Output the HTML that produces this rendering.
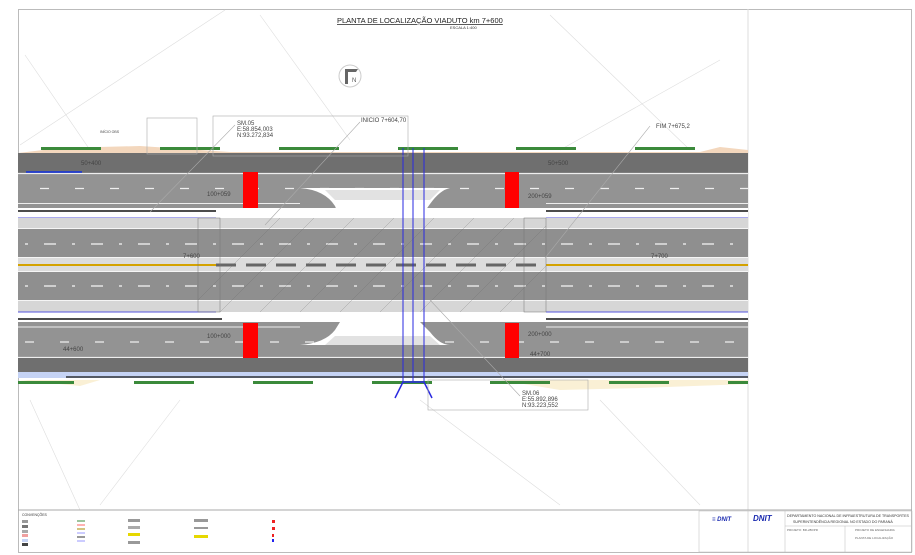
<!DOCTYPE html>
<html><head><meta charset="utf-8"><style>
html,body{margin:0;padding:0;background:#fff;}
svg{display:block;font-family:"Liberation Sans",sans-serif;}
</style></head><body>
<svg width="915" height="555" viewBox="0 0 915 555" xmlns="http://www.w3.org/2000/svg">
<rect width="915" height="555" fill="#fff"/>
<!-- frame -->
<rect x="18.5" y="9.5" width="893" height="543" fill="none" stroke="#bbb" stroke-width="1"/>
<line x1="748" y1="9" x2="748" y2="510" stroke="#ddd"/>
<!-- faint construction lines -->
<g stroke="#ddd" stroke-width="0.6" fill="none">
<line x1="20" y1="145" x2="225" y2="10"/>
<line x1="25" y1="55" x2="90" y2="150"/>
<line x1="260" y1="15" x2="350" y2="140"/>
<line x1="550" y1="15" x2="690" y2="150"/>
<line x1="720" y1="60" x2="560" y2="150"/>
<line x1="30" y1="400" x2="80" y2="510"/>
<line x1="420" y1="400" x2="560" y2="505"/>
<line x1="600" y1="400" x2="700" y2="505"/>
<line x1="180" y1="400" x2="100" y2="505"/>
</g>
<!-- title -->
<text x="337" y="23" font-size="7.5" fill="#222" text-decoration="underline">PLANTA DE LOCALIZAÇÃO VIADUTO km 7+600</text>
<text x="450" y="29" font-size="4" fill="#333">ESCALA 1:400</text>
<circle cx="350" cy="76" r="11" fill="none" stroke="#ccc"/>
<path d="M345 84 L345 69 L358 69 L356 72 L348 72 L348 84Z" fill="#666"/>
<text x="352" y="82" font-size="6" fill="#555">N</text>
<!-- ground strips -->
<path d="M18 153 L60 148 L140 146 L230 152 L700 152 L720 147 L748 150 L748 153Z" fill="#f3d7bd"/>
<path d="M18 380 L80 386 L100 380Z M500 380 L560 390 L640 388 L748 384 L748 380Z" fill="#faf0d5"/>
<g fill="#3b8a3b">
<rect x="41" y="147" width="60" height="3"/><rect x="160" y="147" width="60" height="3"/><rect x="279" y="147" width="60" height="3"/><rect x="398" y="147" width="60" height="3"/><rect x="516" y="147" width="60" height="3"/><rect x="635" y="147" width="60" height="3"/>
<rect x="18" y="381" width="56" height="3"/><rect x="134" y="381" width="60" height="3"/><rect x="253" y="381" width="60" height="3"/><rect x="372" y="381" width="60" height="3"/><rect x="490" y="381" width="60" height="3"/><rect x="609" y="381" width="60" height="3"/><rect x="728" y="381" width="20" height="3"/>
</g>
<!-- top road -->
<rect x="18" y="153" width="730" height="20" fill="#6f6f6f"/>
<rect x="18" y="173" width="730" height="35" fill="#939393"/>
<line x1="18" y1="173.5" x2="748" y2="173.5" stroke="#eee" stroke-width="1.2"/>
<line x1="18" y1="203.5" x2="300" y2="203.5" stroke="#eee" stroke-width="1"/>
<line x1="546" y1="203.5" x2="748" y2="203.5" stroke="#eee" stroke-width="1"/>
<line x1="26" y1="172" x2="82" y2="172" stroke="#1030e0" stroke-width="1.6"/>
<line x1="40" y1="188.5" x2="748" y2="188.5" stroke="#eee" stroke-width="1.3" stroke-dasharray="9,26"/>
<rect x="18" y="208" width="730" height="10" fill="#fff"/>
<line x1="18" y1="211" x2="216" y2="211" stroke="#111" stroke-width="1.6"/>
<line x1="546" y1="211" x2="748" y2="211" stroke="#111" stroke-width="1.6"/>
<line x1="18" y1="218" x2="216" y2="218" stroke="#5555dd" stroke-width="1"/>
<line x1="546" y1="218" x2="748" y2="218" stroke="#5555dd" stroke-width="1"/>
<!-- main carriageways -->
<rect x="18" y="218" width="730" height="10" fill="#d6d6d6"/>
<rect x="18" y="228" width="730" height="30" fill="#8f8f8f"/>
<rect x="18" y="258" width="730" height="13" fill="#dcdcdc"/>
<rect x="18" y="271" width="730" height="30" fill="#8f8f8f"/>
<rect x="18" y="301" width="730" height="11" fill="#d6d6d6"/>
<g stroke="#f5f5f5" stroke-width="1">
<line x1="18" y1="228.5" x2="748" y2="228.5"/><line x1="18" y1="257.5" x2="748" y2="257.5"/>
<line x1="18" y1="271.5" x2="748" y2="271.5"/><line x1="18" y1="300.5" x2="748" y2="300.5"/>
</g>
<line x1="25" y1="244" x2="748" y2="244" stroke="#f5f5f5" stroke-width="1.3" stroke-dasharray="3,16,12,16"/>
<line x1="25" y1="286" x2="748" y2="286" stroke="#f5f5f5" stroke-width="1.3" stroke-dasharray="3,16,12,16"/>
<line x1="18" y1="265" x2="216" y2="265" stroke="#d4a200" stroke-width="2"/>
<line x1="546" y1="265" x2="748" y2="265" stroke="#d4a200" stroke-width="2"/>
<line x1="216" y1="265" x2="546" y2="265" stroke="#666" stroke-width="3" stroke-dasharray="20,10"/>
<!-- bottom -->
<rect x="18" y="312" width="730" height="10" fill="#fff"/>
<line x1="18" y1="312" x2="216" y2="312" stroke="#5555dd" stroke-width="1"/>
<line x1="546" y1="312" x2="748" y2="312" stroke="#5555dd" stroke-width="1"/>
<line x1="18" y1="319" x2="222" y2="319" stroke="#111" stroke-width="1.6"/>
<line x1="546" y1="319" x2="748" y2="319" stroke="#111" stroke-width="1.6"/>
<rect x="18" y="322" width="730" height="36" fill="#939393"/>
<line x1="18" y1="327" x2="300" y2="327" stroke="#eee" stroke-width="1"/>
<line x1="546" y1="327" x2="748" y2="327" stroke="#eee" stroke-width="1"/>
<line x1="18" y1="357.5" x2="748" y2="357.5" stroke="#eee" stroke-width="1.2"/>
<line x1="25" y1="342" x2="748" y2="342" stroke="#eee" stroke-width="1.3" stroke-dasharray="9,26"/>
<rect x="18" y="358" width="730" height="14" fill="#6f6f6f"/>
<rect x="18" y="372" width="730" height="6" fill="#c5d3f5"/>
<line x1="66" y1="377" x2="748" y2="377" stroke="#111" stroke-width="1.2"/>
<!-- islands -->
<path d="M300 188 Q325 190 335 206 L340 218 L420 218 L430 204 Q440 190 450 188Z" fill="#fff"/>
<path d="M325 190 L440 190 L430 200 L335 200Z" fill="#e2e2e2"/>
<path d="M300 345 Q325 343 335 330 L340 322 L420 322 L430 332 Q440 345 450 345Z" fill="#fff"/>
<path d="M325 345 L440 345 L430 336 L335 336Z" fill="#e2e2e2"/>
<!-- red blocks -->
<g fill="#f00"><rect x="243" y="172" width="15" height="36"/><rect x="505" y="172" width="14" height="36"/><rect x="243" y="323" width="15" height="35"/><rect x="505" y="323" width="14" height="35"/></g>
<!-- deck hatch -->
<g stroke="#666" stroke-width="0.4" opacity="0.6">
<line x1="198" y1="300" x2="280" y2="218"/><line x1="220" y1="312" x2="314" y2="218"/><line x1="260" y1="312" x2="354" y2="218"/><line x1="300" y1="312" x2="394" y2="218"/><line x1="340" y1="312" x2="434" y2="218"/><line x1="380" y1="312" x2="474" y2="218"/><line x1="420" y1="312" x2="514" y2="218"/><line x1="460" y1="312" x2="546" y2="226"/><line x1="500" y1="312" x2="546" y2="266"/>
</g>
<rect x="198" y="218" width="22" height="94" fill="none" stroke="#777" stroke-width="0.5"/>
<rect x="524" y="218" width="22" height="94" fill="none" stroke="#777" stroke-width="0.5"/>
<!-- blue lines -->
<g stroke="#2a2ae0" stroke-width="1"><line x1="403" y1="148" x2="403" y2="382"/><line x1="413" y1="148" x2="413" y2="382"/><line x1="424" y1="148" x2="424" y2="382"/>
<path d="M403 382 L424 382 M403 382 L395 398 M424 382 L432 398" stroke-width="1.5"/></g>
<!-- callout boxes -->
<g fill="none" stroke="#aaa" stroke-width="0.6">
<rect x="147" y="118" width="50" height="36"/><rect x="213" y="116" width="195" height="40"/>
<rect x="428" y="380" width="160" height="30"/>
<line x1="150" y1="212" x2="235" y2="125"/><line x1="265" y1="225" x2="360" y2="122"/><line x1="545" y1="258" x2="650" y2="126"/><line x1="430" y1="300" x2="520" y2="396"/>
</g>
<g font-size="6" fill="#444">
<text x="237" y="125">SM.05</text><text x="237" y="131">E:58.854,003</text><text x="237" y="137">N:93.272,834</text>
<text x="361" y="122">INICIO  7+604,70</text><text x="656" y="128">FIM  7+675,2</text>
<text x="522" y="395">SM.06</text><text x="522" y="401">E:55.892,896</text><text x="522" y="407">N:93.223,552</text>
<text x="81" y="165">50+400</text><text x="548" y="165">50+500</text>
<text x="207" y="196">100+059</text><text x="528" y="198">200+059</text>
<text x="207" y="338">100+000</text><text x="528" y="336">200+000</text>
<text x="63" y="351">44+600</text><text x="530" y="356">44+700</text>
<text x="183" y="258">7+600</text><text x="651" y="258">7+700</text>
<text x="100" y="133" font-size="3.5">INÍCIO  OBS</text>
</g>
<!-- legend / title block -->
<line x1="18" y1="510" x2="912" y2="510" stroke="#aaa"/>
<text x="22" y="516" font-size="3.5" fill="#333">CONVENÇÕES</text>
<g stroke="#bbb" fill="none" stroke-width="0.5"><rect x="699" y="511" width="213" height="41"/><line x1="748" y1="511" x2="748" y2="552"/><line x1="785" y1="511" x2="785" y2="552"/><line x1="785" y1="526" x2="912" y2="526"/><line x1="845" y1="526" x2="845" y2="552"/></g>
<g>
<rect x="22" y="520" width="6" height="3" fill="#999"/><rect x="22" y="525" width="6" height="3" fill="#777"/><rect x="22" y="530" width="6" height="3" fill="#aaa"/><rect x="22" y="534" width="6" height="3" fill="#f0a0a0"/><rect x="22" y="539" width="6" height="3" fill="#c5d3f5"/><rect x="22" y="543" width="6" height="3" fill="#444"/>
<line x1="77" y1="521" x2="85" y2="521" stroke="#3b8a3b"/><line x1="77" y1="525" x2="85" y2="525" stroke="#f66"/><line x1="77" y1="529" x2="85" y2="529" stroke="#a80"/><line x1="77" y1="533" x2="85" y2="533" stroke="#99f"/><line x1="77" y1="537" x2="85" y2="537" stroke="#333"/><line x1="77" y1="541" x2="85" y2="541" stroke="#99f"/>
<rect x="128" y="519" width="12" height="3" fill="#999"/><rect x="128" y="526" width="12" height="3" fill="#aaa"/><rect x="128" y="533" width="12" height="3" fill="#e6d800"/><rect x="128" y="541" width="12" height="3" fill="#999"/>
<rect x="194" y="519" width="14" height="3" fill="#999"/><rect x="194" y="527" width="14" height="2" fill="#999"/><rect x="194" y="535" width="14" height="3" fill="#e6d800"/>
<rect x="272" y="520" width="3" height="3" fill="#e22"/><rect x="272" y="527" width="3" height="3" fill="#e22"/><rect x="272" y="534" width="2" height="3" fill="#e22"/><rect x="272" y="539" width="2" height="3" fill="#22e"/>
</g>
<text x="712" y="521" font-size="6" font-weight="bold" font-style="italic" fill="#1a2ab0">≡ DNIT</text>
<text x="753" y="521" font-size="8" font-weight="bold" font-style="italic" fill="#1a2ab0">DNIT</text>
<text x="787" y="517" font-size="3.6" fill="#333">DEPARTAMENTO NACIONAL DE INFRAESTRUTURA DE TRANSPORTES</text>
<text x="793" y="523" font-size="3.6" fill="#333">SUPERINTENDÊNCIA REGIONAL NO ESTADO DO PARANÁ</text>
<text x="787" y="531" font-size="3" fill="#666">PROJETO: BR-280/PR</text>
<text x="855" y="531" font-size="3" fill="#666">PROJETO DE ENGENHARIA</text>
<text x="855" y="539" font-size="3" fill="#666">PLANTA DE LOCALIZAÇÃO</text>
</svg>
</body></html>
